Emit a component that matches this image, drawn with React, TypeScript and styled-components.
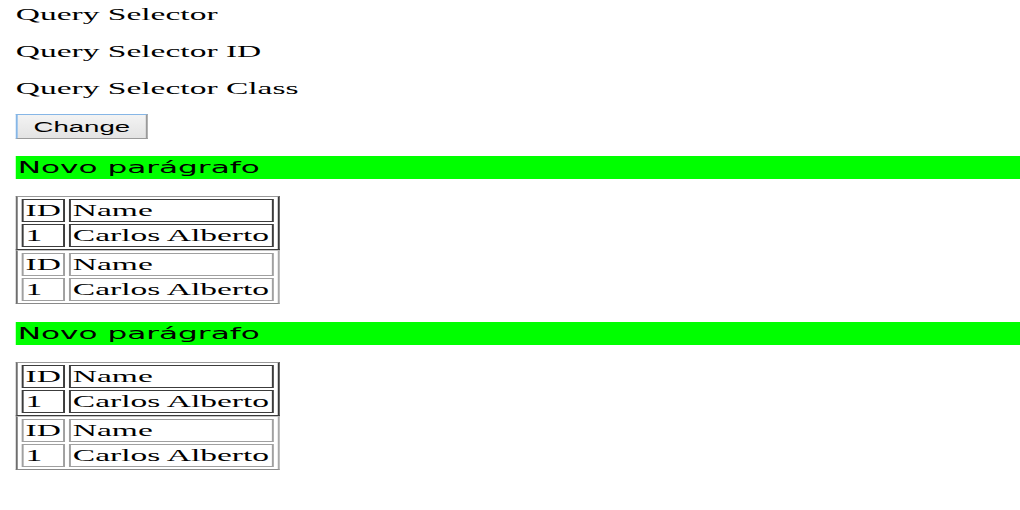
import React from "react";
import styled, { createGlobalStyle } from "styled-components";

const Global = createGlobalStyle`
  html, body {
    margin: 0;
    padding: 0;
    background: #ffffff;
    overflow: hidden;
  }
`;

/* The reference is a page rendered wide: everything is stretched ~1.97x horizontally. */
const Stretch = styled.div`
  box-sizing: border-box;
  width: 518px;
  padding: 5px 0 0 8px;
  transform: scaleX(1.97);
  transform-origin: 0 0;
  display: flex;
  flex-direction: column;
  align-items: flex-start;
  color: #000;
`;

const Para = styled.p`
  margin: 0 0 17px 0;
  font-family: "Liberation Serif", "Times New Roman", serif;
  font-size: 17px;
  line-height: 20px;
  &:last-of-type {
    margin-bottom: 0;
  }
`;

const Button = styled.button`
  margin-top: 15px;
  height: 25px;
  padding: 0 8px;
  font-family: "Liberation Sans", Arial, sans-serif;
  font-size: 14px;
  color: #000;
  background: linear-gradient(#f3f3f3, #e3e3e3);
  border: 1px solid;
  border-color: #86b6e6 #9a9a9a #9a9a9a #86b6e6;
  border-radius: 0;
  cursor: pointer;
`;

const Section = styled.section<{ $gap: number }>`
  margin-top: ${(p) => p.$gap}px;
  align-self: stretch;
  display: flex;
  flex-direction: column;
  align-items: flex-start;
`;

const Bar = styled.div`
  align-self: stretch;
  height: 23px;
  padding-left: 1px;
  background: #00ff00;
  font-family: "Comic Sans MS", "DejaVu Sans", sans-serif;
  font-size: 15.8px;
  line-height: 23px;
  white-space: nowrap;
`;

const Grid = styled.table<{ $light?: boolean }>`
  border-collapse: separate;
  border-spacing: 2px;
  border-style: solid;
  border-width: 1px;
  border-color: ${(p) =>
    p.$light
      ? "#c4c4c4 #a8a8a8 #8a8a8a #6e6e6e"
      : "#9a9a9a #3a3a3a #3a3a3a #6e6e6e"};
  margin-top: ${(p) => (p.$light ? "0" : "17px")};

  td {
    border: 1px solid ${(p) => (p.$light ? "#a0a0a0" : "#3c3c3c")};
    padding: 1px;
    font-family: "Liberation Serif", "Times New Roman", serif;
    font-size: 17px;
    line-height: 19px;
    white-space: nowrap;
    text-align: left;
  }
`;

const PeopleTable: React.FC<{ light?: boolean }> = ({ light }) => (
  <Grid $light={light}>
    <tbody>
      <tr>
        <td>ID</td>
        <td>Name</td>
      </tr>
      <tr>
        <td>1</td>
        <td>Carlos Alberto</td>
      </tr>
    </tbody>
  </Grid>
);

const Block: React.FC<{ gap: number }> = ({ gap }) => (
  <Section $gap={gap}>
    <Bar>Novo parágrafo</Bar>
    <PeopleTable />
    <PeopleTable light />
  </Section>
);

export default function App() {
  return (
    <>
      <Global />
      <Stretch>
        <Para>Query Selector</Para>
        <Para>Query Selector ID</Para>
        <Para>Query Selector Class</Para>
        <Button>Change</Button>
        <Block gap={17} />
        <Block gap={18} />
      </Stretch>
    </>
  );
}
